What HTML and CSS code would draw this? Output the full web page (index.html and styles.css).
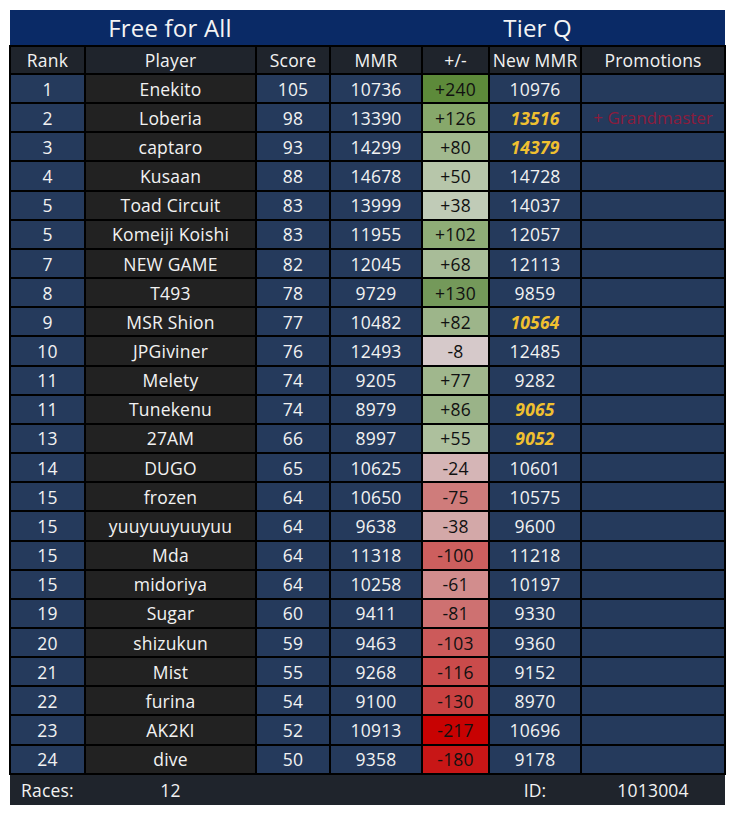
FILE: index.html
```html
<!DOCTYPE html>
<html>
<head>
<meta charset="utf-8">
<link rel="stylesheet" href="styles.css">
</head>
<body>
<table class="board">
  <colgroup>
    <col class="c-rank"><col class="c-player"><col class="c-score"><col class="c-mmr"><col class="c-delta"><col class="c-new"><col class="c-promo">
  </colgroup>
  <thead>
    <tr class="title">
      <th colspan="3">Free for All</th>
      <th colspan="4" class="tier">Tier Q</th>
    </tr>
    <tr class="head">
      <th>Rank</th><th>Player</th><th>Score</th><th>MMR</th><th>+/-</th><th>New MMR</th><th>Promotions</th>
    </tr>
  </thead>
  <tbody>
    <tr><td class="rank">1</td><td class="player">Enekito</td><td class="num">105</td><td class="num">10736</td><td class="delta" style="background:#5d8a3a">+240</td><td class="num">10976</td><td class="promo"></td></tr>
    <tr><td class="rank">2</td><td class="player">Loberia</td><td class="num">98</td><td class="num">13390</td><td class="delta" style="background:#87a86b">+126</td><td class="num up">13516</td><td class="promo"><span class="rankup">+ Grandmaster</span></td></tr>
    <tr><td class="rank">3</td><td class="player">captaro</td><td class="num">93</td><td class="num">14299</td><td class="delta" style="background:#a2b98f">+80</td><td class="num up">14379</td><td class="promo"></td></tr>
    <tr><td class="rank">4</td><td class="player">Kusaan</td><td class="num">88</td><td class="num">14678</td><td class="delta" style="background:#b7c6aa">+50</td><td class="num">14728</td><td class="promo"></td></tr>
    <tr><td class="rank">5</td><td class="player">Toad Circuit</td><td class="num">83</td><td class="num">13999</td><td class="delta" style="background:#c0cbb7">+38</td><td class="num">14037</td><td class="promo"></td></tr>
    <tr><td class="rank">5</td><td class="player">Komeiji Koishi</td><td class="num">83</td><td class="num">11955</td><td class="delta" style="background:#8fad77">+102</td><td class="num">12057</td><td class="promo"></td></tr>
    <tr><td class="rank">7</td><td class="player">NEW GAME</td><td class="num">82</td><td class="num">12045</td><td class="delta" style="background:#a8bc98">+68</td><td class="num">12113</td><td class="promo"></td></tr>
    <tr><td class="rank">8</td><td class="player">T493</td><td class="num">78</td><td class="num">9729</td><td class="delta" style="background:#74995a">+130</td><td class="num">9859</td><td class="promo"></td></tr>
    <tr><td class="rank">9</td><td class="player">MSR Shion</td><td class="num">77</td><td class="num">10482</td><td class="delta" style="background:#9db58a">+82</td><td class="num up">10564</td><td class="promo"></td></tr>
    <tr><td class="rank">10</td><td class="player">JPGiviner</td><td class="num">76</td><td class="num">12493</td><td class="delta" style="background:#d6c9ca">-8</td><td class="num">12485</td><td class="promo"></td></tr>
    <tr><td class="rank">11</td><td class="player">Melety</td><td class="num">74</td><td class="num">9205</td><td class="delta" style="background:#a0b78d">+77</td><td class="num">9282</td><td class="promo"></td></tr>
    <tr><td class="rank">11</td><td class="player">Tunekenu</td><td class="num">74</td><td class="num">8979</td><td class="delta" style="background:#9ab388">+86</td><td class="num up">9065</td><td class="promo"></td></tr>
    <tr><td class="rank">13</td><td class="player">27AM</td><td class="num">66</td><td class="num">8997</td><td class="delta" style="background:#adc09d">+55</td><td class="num up">9052</td><td class="promo"></td></tr>
    <tr><td class="rank">14</td><td class="player">DUGO</td><td class="num">65</td><td class="num">10625</td><td class="delta" style="background:#d5b5b6">-24</td><td class="num">10601</td><td class="promo"></td></tr>
    <tr><td class="rank">15</td><td class="player">frozen</td><td class="num">64</td><td class="num">10650</td><td class="delta" style="background:#cf7c7b">-75</td><td class="num">10575</td><td class="promo"></td></tr>
    <tr><td class="rank">15</td><td class="player">yuuyuuyuuyuu</td><td class="num">64</td><td class="num">9638</td><td class="delta" style="background:#d3a8a8">-38</td><td class="num">9600</td><td class="promo"></td></tr>
    <tr><td class="rank">15</td><td class="player">Mda</td><td class="num">64</td><td class="num">11318</td><td class="delta" style="background:#cd5f5e">-100</td><td class="num">11218</td><td class="promo"></td></tr>
    <tr><td class="rank">15</td><td class="player">midoriya</td><td class="num">64</td><td class="num">10258</td><td class="delta" style="background:#d28d8d">-61</td><td class="num">10197</td><td class="promo"></td></tr>
    <tr><td class="rank">19</td><td class="player">Sugar</td><td class="num">60</td><td class="num">9411</td><td class="delta" style="background:#ce7171">-81</td><td class="num">9330</td><td class="promo"></td></tr>
    <tr><td class="rank">20</td><td class="player">shizukun</td><td class="num">59</td><td class="num">9463</td><td class="delta" style="background:#cc5a5a">-103</td><td class="num">9360</td><td class="promo"></td></tr>
    <tr><td class="rank">21</td><td class="player">Mist</td><td class="num">55</td><td class="num">9268</td><td class="delta" style="background:#ca4b4b">-116</td><td class="num">9152</td><td class="promo"></td></tr>
    <tr><td class="rank">22</td><td class="player">furina</td><td class="num">54</td><td class="num">9100</td><td class="delta" style="background:#c94141">-130</td><td class="num">8970</td><td class="promo"></td></tr>
    <tr><td class="rank">23</td><td class="player">AK2KI</td><td class="num">52</td><td class="num">10913</td><td class="delta" style="background:#c80202">-217</td><td class="num">10696</td><td class="promo"></td></tr>
    <tr><td class="rank">24</td><td class="player">dive</td><td class="num">50</td><td class="num">9358</td><td class="delta" style="background:#c81616">-180</td><td class="num">9178</td><td class="promo"></td></tr>
  </tbody>
  <tfoot>
    <tr class="foot">
      <td class="races">Races:</td><td>12</td><td></td><td></td><td></td><td>ID:</td><td>1013004</td>
    </tr>
  </tfoot>
</table>
</body>
</html>
```
FILE: styles.css
```css
html, body {
  margin: 0;
  padding: 0;
  background: #ffffff;
}
body {
  padding: 10px 9px 9px 9px;
  font-family: "Open Sans", "Noto Sans", sans-serif;
  color: #f2f2f2;
}
.board {
  width: 715px;
  border-collapse: collapse;
  table-layout: fixed;
  font-size: 17.5px;
  letter-spacing: 0.2px;
}
.c-rank { width: 75px; }
.c-player { width: 171px; }
.c-score { width: 74px; }
.c-mmr { width: 92px; }
.c-delta { width: 67px; }
.c-new { width: 92px; }
.c-promo { width: 144px; }

.board th, .board td {
  text-align: center;
  padding: 0;
  white-space: nowrap;
  font-weight: normal;
}
.title th {
  background: #0a2a66;
  height: 35px;
  font-size: 24px;
  color: #f4f4f4;
  line-height: 34px;
}
.title .tier {
  padding-left: 20px;
}
.head th {
  background: #1f242c;
  border: 2px solid #000;
  height: 26px;
  line-height: 26px;
}
.board tbody td {
  border: 2px solid #000;
  height: 27.17px;
  line-height: 26px;
  background: #253a5c;
}
.board tbody td.player {
  background: #222222;
}
.board tbody td.delta {
  color: #111;
}
.board tbody td.up {
  color: #f0c030;
  font-weight: bold;
  font-style: italic;
}
.rankup {
  color: #8c1c3c;
  font-size: 17px;
  letter-spacing: 0;
}
.foot td {
  background: #1f242c;
  height: 30px;
  line-height: 30px;
}
.foot td.races {
  text-align: left;
  padding-left: 11px;
}
```
